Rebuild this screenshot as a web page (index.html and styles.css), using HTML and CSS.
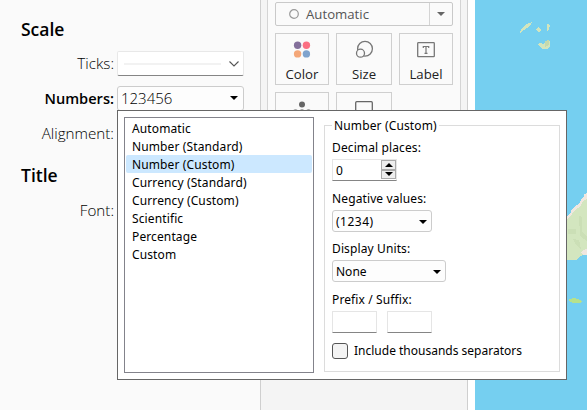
FILE: index.html
```html
<!DOCTYPE html>
<html lang="en">
<head>
<meta charset="utf-8">
<title>Format</title>
<link rel="stylesheet" href="styles.css">
</head>
<body>
<div class="app">
  <section class="format">
    <h2>Scale</h2>
    <div class="row"><label>Ticks:</label>
      <div class="select ticks"><i class="sample"></i><svg width="12" height="8" viewBox="0 0 12 8"><path d="M1.5 1.5L6 6L10.500 1.500" fill="none" stroke="#555" stroke-width="1.1"/></svg></div></div>
    <div class="row numbers"><label class="bold">Numbers:</label>
      <div class="select number"><span>123456</span><i class="caret"></i></div></div>
    <div class="row align"><label>Alignment:</label></div>
    <h2 class="title">Title</h2>
    <div class="row font"><label>Font:</label></div>
  </section>
  <section class="marks">
    <div class="card">
      <div class="marktype"><svg width="10" height="10" viewBox="0 0 10 10"><circle cx="5" cy="5" r="4.300" fill="none" stroke="#999" stroke-width="1.2"/></svg><span>Automatic</span><div class="drop"><i class="caret gray"></i></div></div>
      <div class="grid">
        <div class="mark"><svg width="20" height="20" viewBox="0 0 20 20"><circle cx="5.600" cy="5.200" r="3.700" fill="#84709b"/><circle cx="14.400" cy="5.200" r="3.700" fill="#fb7083"/><circle cx="5.600" cy="13.900" r="3.700" fill="#f4a778"/><circle cx="14.400" cy="13.900" r="3.700" fill="#7fa3cd"/></svg><span>Color</span></div>
        <div class="mark"><svg width="20" height="20" viewBox="0 0 20 20"><circle cx="11" cy="8.700" r="7.400" fill="none" stroke="#777" stroke-width="1.300"/><circle cx="6.500" cy="13.200" r="4" fill="#fafafa" stroke="#777" stroke-width="1.300"/></svg><span>Size</span></div>
        <div class="mark"><svg width="20" height="20" viewBox="0 0 20 20"><rect x="1.700" y="2.700" width="16.600" height="14" rx=".7" fill="none" stroke="#777" stroke-width="1.300"/><path d="M7.300 8V6.500h5.400V8M10 6.500v7M8.500 13.400h3" fill="none" stroke="#777" stroke-width="1.200"/></svg><span>Label</span></div>
        <div class="mark"><svg width="20" height="20" viewBox="0 0 20 20"><circle cx="10" cy="5.500" r="3" fill="#666"/><circle cx="3.500" cy="13" r="2.700" fill="#888"/><circle cx="10" cy="13" r="2.700" fill="#888"/><circle cx="16.500" cy="13" r="2.700" fill="#888"/></svg></div>
        <div class="mark"><svg width="20" height="20" viewBox="0 0 20 20"><rect x="1.700" y="2.700" width="16.600" height="16" rx="1" fill="none" stroke="#666" stroke-width="1.300"/></svg></div>
      </div>
    </div>
  </section>
  <svg class="map" width="112" height="410" viewBox="475 0 112 410" shape-rendering="crispEdges">
    <rect x="475" width="112" height="410" fill="#75cff0"/>
    <path d="M520 33L521 29L526 24L532 22L530 26L524 30ZM537 28l2-1l2 3l-1 2h-2l-2-2ZM547 24h2l1 2l-1 3l-2 2ZM538 44l2-1l3 1l3-3l3-1l1 2v4l-3 3h-5l-2-2Z" fill="#d2e5bd"/>
    <path d="M545 41l4-1v5l-4 2Z" fill="#c5d9ac"/>
    <path d="M567 219l4-3l3-6l5-3l2-6l5-3v-3h1v60h-4l-4 2l-3 3h-9Z" fill="#d3e6bf"/>
    <path d="M567 216l4-4l1-3l5-4l3-2l1-4l3-2v-3l3-1v6l-4 2l-3 6l-5 3l-3 4l-5 5ZM581 253l2-3l4-1v6h-4Z" fill="#f0e7df"/>
    <path d="M568 229h8v5h-8ZM579 216l3 1v15l5 4v5l-7-5ZM573 239l6 1l2 9l-5-4Z" fill="#cbdfb6"/>
    <path d="M568 300l5-2l5 1l4 2l-2 2h-7Z" fill="#b6e18c"/>
  </svg>
</div>
<div class="popup">
  <ul class="list">
    <li>Automatic</li><li>Number (Standard)</li><li class="selected">Number (Custom)</li><li>Currency (Standard)</li><li>Currency (Custom)</li><li>Scientific</li><li>Percentage</li><li>Custom</li>
  </ul>
  <fieldset>
    <legend>Number (Custom)</legend>
    <p>Decimal places:</p>
    <div class="spin"><span>0</span><div class="steps"><b><i class="caret up"></i></b><b><i class="caret"></i></b></div></div>
    <p class="negative">Negative values:</p>
    <div class="select neg"><span>(1234)</span><i class="caret"></i></div>
    <p class="display">Display Units:</p>
    <div class="select units"><span>None</span><i class="caret"></i></div>
    <p class="prefix">Prefix / Suffix:</p>
    <div class="inputs"><div></div><div></div></div>
    <div class="check"><i></i><span>Include thousands separators</span></div>
  </fieldset>
</div>
</body>
</html>
```
FILE: styles.css
```css
* { box-sizing: border-box; }
body { margin: 0; width: 587px; height: 410px; overflow: hidden; background: #fff; color: #222; font: 15px/20px "Open Sans", sans-serif; }
span { white-space: nowrap; }
svg { display: block; flex: none; }
.app { display: flex; height: 410px; }
.format { width: 261px; flex: none; background: #fafafa; border-right: 1px solid #cfcfcf; padding-top: 19px; font-weight: 350; color: #000; }
h2 { margin: 0 0 12px 21px; font-size: 17.5px; line-height: 20px; font-weight: 600; color: #000; }
.row { display: flex; align-items: center; height: 25px; }
.row label { width: 114px; margin-right: 3px; padding-bottom: 1px; text-align: right; font-size: 15.2px; }
.row .bold { font-weight: 600; font-size: 14.6px; }
.numbers { margin-top: 10px; }
.align { margin-top: 10px; }
h2.title { position: relative; top: -1px; margin: 20px 0 12px 21px; }
.font { margin-top: 12px; }
.select { display: flex; align-items: center; justify-content: space-between; border: 1px solid #ccc; border-radius: 3px; background: #fdfdfd; }
.row .select { width: 127px; height: 25px; }
.row .ticks { background: #fff; border-color: #e8e8e8; border-bottom-color: #858585; padding: 0 3px 0 6px; border-radius: 2px; }
.sample { width: 97px; height: 2px; background: #f2f2f2; }
.row .number { padding: 0 5px 2px 3px; }
.caret { width: 0; height: 0; border: 4px solid transparent; border-top-color: #000; border-bottom: 0; }
.gray { border-top-color: #666; }
.marks { width: 207px; flex: none; background: #f4f4f4; border-right: 1px solid #cfcfcf; padding: 0 6px; }
.card { height: 360px; background: #fafafa; border: solid #d4d4d4; border-width: 0 1px; padding: 2px 7px 0; }
.marktype { display: flex; align-items: center; width: 178px; height: 24px; border: 1px solid #c9c9c9; border-radius: 2px; padding-left: 13px; font-size: 13.2px; color: #555; }
.marktype span { margin-left: 7px; }
.drop { margin-left: auto; width: 23px; height: 22px; border-left: 1px solid #d4d4d4; display: flex; align-items: center; justify-content: center; }
.grid { display: grid; grid-template-columns: 54px 56px 54px; grid-auto-rows: 52px; gap: 7px; margin-top: 7px; }
.mark { border: 1px solid #cfcfcf; display: flex; flex-direction: column; align-items: center; padding-top: 6px; font-size: 13.2px; line-height: 18px; }
.mark span { margin-top: 5px; }
.map { margin-left: 7px; }
.popup { position: absolute; left: 117px; top: 110px; width: 450px; height: 270px; border: 1px solid #666; background: #fff; display: flex; gap: 10px; padding: 6px; color: #000; font: 12px/18px "Noto Sans", sans-serif; }
.list { list-style: none; margin: 0; width: 190px; height: 256px; border: 1px solid #83838b; padding: 1px; }
.list li { height: 18px; line-height: 20px; padding-left: 6px; border-radius: 2px; letter-spacing: .12px; }
.selected { background: #cce8ff; }
fieldset { width: 236px; height: 255px; margin: 0; border: 1px solid #dcdcdc; padding: 5px 7px 0; min-width: 0; }
legend { height: 17px; line-height: 17px; padding: 0 2px; letter-spacing: .14px; }
p { margin: 0; height: 18px; letter-spacing: .12px; }
.negative { margin-top: 9px; }
.display { margin-top: 8px; }
.prefix { margin-top: 9px; }
.spin { display: flex; justify-content: space-between; width: 65px; height: 22px; margin-top: 2px; border: 1px solid #e5e5e5; border-bottom-color: #858585; padding-left: 3px; line-height: 22px; }
.steps { width: 15px; height: 19px; margin: 0; display: flex; flex-direction: column; }
.steps b { flex: 1; border: 1px solid #aaa; background: #eee; display: flex; align-items: center; justify-content: center; }
.up { transform: rotate(180deg); }
.popup .select { height: 22px; margin-top: 2px; padding: 1px 4px 0 3px; }
.neg { width: 100px; }
.neg span { letter-spacing: .5px; }
.units { width: 114px; }
.inputs { display: flex; gap: 10px; margin-top: 2px; }
.inputs div { width: 45px; height: 22px; border: 1px solid #e5e5e5; border-bottom-color: #858585; border-radius: 1px; }
.check { display: flex; align-items: center; gap: 6px; height: 18px; margin-top: 9px; }
.check i { width: 16px; height: 16px; border: 1px solid #555; border-radius: 3px; background: #f3f3f3; }
```
